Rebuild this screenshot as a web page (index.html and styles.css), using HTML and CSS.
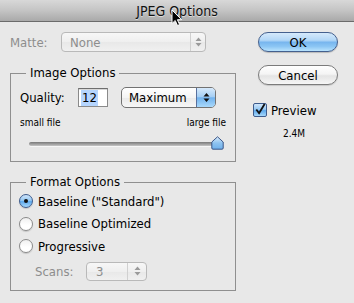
FILE: index.html
```html
<!DOCTYPE html>
<html>
<head>
<meta charset="utf-8">
<link rel="stylesheet" href="styles.css">
</head>
<body>
<div class="window">
  <div class="titlebar"><span class="title">JPEG Options</span></div>
  <div class="content">
    <div class="left">
      <div class="matte-row">
        <span class="lbl dim">Matte:</span>
        <div class="popup dis matte-pop">
          <span class="pop-text">None</span>
          <span class="pop-arrows"><svg width="7" height="10" viewBox="0 0 7 10"><path d="M3.5 0.5 L6.5 4 L0.5 4 Z M3.5 9.5 L6.5 6 L0.5 6 Z" fill="#9a9a9a"/></svg></span>
        </div>
      </div>
      <fieldset class="group image-opts">
        <legend>Image Options</legend>
        <div class="quality-row">
          <span class="lbl">Quality:</span>
          <div class="field"><span class="sel">12</span></div>
          <div class="popup max-pop">
            <span class="pop-text">Maximum</span>
            <span class="pop-arrows blue"><svg width="7" height="11" viewBox="0 0 7 11"><path d="M3.5 1 L6.5 4.5 L0.5 4.5 Z M3.5 10 L6.5 6.5 L0.5 6.5 Z" fill="#111"/></svg></span>
          </div>
        </div>
        <div class="scale-labels"><span>small file</span><span>large file</span></div>
        <div class="slider">
          <div class="track"></div>
          <svg class="thumb" width="13" height="14" viewBox="0 0 13 14">
            <defs>
              <linearGradient id="tg" x1="0" y1="0" x2="0" y2="1">
                <stop offset="0" stop-color="#dcecfb"/>
                <stop offset="0.5" stop-color="#8ec3f0"/>
                <stop offset="1" stop-color="#6fb1ec"/>
              </linearGradient>
            </defs>
            <path d="M6.5 0.8 L12.2 6 L12.2 12 Q12.2 13.2 11 13.2 L2 13.2 Q0.8 13.2 0.8 12 L0.8 6 Z" fill="url(#tg)" stroke="#3b5688" stroke-width="1"/>
          </svg>
        </div>
      </fieldset>
      <fieldset class="group format-opts">
        <legend>Format Options</legend>
        <div class="radio-row"><span class="radio on"><span class="dot"></span></span><span>Baseline ("Standard")</span></div>
        <div class="radio-row"><span class="radio"></span><span>Baseline Optimized</span></div>
        <div class="radio-row"><span class="radio"></span><span>Progressive</span></div>
        <div class="scans-row">
          <span class="lbl dim">Scans:</span>
          <div class="popup dis scans-pop">
            <span class="pop-text">3</span>
            <span class="pop-arrows"><svg width="7" height="10" viewBox="0 0 7 10"><path d="M3.5 0.5 L6.5 4 L0.5 4 Z M3.5 9.5 L6.5 6 L0.5 6 Z" fill="#9a9a9a"/></svg></span>
          </div>
        </div>
      </fieldset>
    </div>
    <div class="right">
      <div class="btn ok">OK</div>
      <div class="btn cancel">Cancel</div>
      <div class="check-row">
        <span class="checkbox"><svg width="13" height="13" viewBox="0 0 13 13"><path d="M2.5 6.5 L5.5 10.5 L11.5 0.5" fill="none" stroke="#111" stroke-width="2"/></svg></span>
        <span>Preview</span>
      </div>
      <div class="size">2.4M</div>
    </div>
  </div>
  <svg class="cursor" width="12" height="18" viewBox="0 0 12 18">
    <path d="M1 1 L1 14.5 L4.2 11.5 L6.5 16.5 L8.6 15.6 L6.4 10.7 L10.6 10.7 Z" fill="#000" stroke="#fff" stroke-width="1" stroke-linejoin="round"/>
  </svg>
</div>
</body>
</html>
```

FILE: styles.css
```css
* { box-sizing: border-box; }
html, body { margin: 0; padding: 0; }
body {
  background: #e8e8e8;
  font-family: "DejaVu Sans Condensed", "DejaVu Sans", sans-serif;
  font-stretch: condensed;
  font-size: 13px;
  color: #000;
}
.window {
  position: relative;
  width: 354px;
  height: 303px;
  overflow: hidden;
  background: #e8e8e8;
}
.titlebar {
  height: 22px;
  background: linear-gradient(to bottom, #d8d8d8 0%, #c4c4c4 50%, #a9a9a9 100%);
  border-bottom: 1px solid #6b6b6b;
  display: flex;
  justify-content: center;
  align-items: center;
}
.title {
  font-size: 14px;
  color: #111;
  text-shadow: 0 1px 0 rgba(255,255,255,0.5);
  padding-top: 1px;
}
.content {
  display: flex;
}
.left {
  width: 236px;
  padding-left: 10px;
  padding-top: 10px;
}
.lbl { white-space: nowrap; }
.dim { color: #8d8d8d; }
.matte-row {
  display: flex;
  align-items: center;
  height: 20px;
}
.matte-row .lbl { width: 51px; }
.popup {
  display: flex;
  align-items: center;
  border: 1px solid #7d7d7d;
  border-radius: 4px;
  background: linear-gradient(to bottom, #ffffff 0%, #f4f4f4 50%, #e9e9e9 51%, #f7f7f7 100%);
  overflow: hidden;
}
.popup.dis {
  border-color: #b9b9b9;
  background: linear-gradient(to bottom, #f7f7f7 0%, #efefef 50%, #e8e8e8 51%, #f0f0f0 100%);
  color: #8d8d8d;
}
.pop-text { flex: 1; padding-left: 8px; white-space: nowrap; }
.pop-arrows {
  display: flex;
  align-items: center;
  justify-content: center;
  height: 100%;
  border-left: 1px solid #d0d0d0;
}
.matte-pop { width: 145px; height: 20px; }
.matte-pop .pop-arrows { width: 15px; }
.group {
  margin: 0;
  border: 1px solid #8f8f8f;
  padding: 0 9px 0 9px;
  width: 226px;
}
.group legend {
  padding: 0 4px;
  margin-left: 6px;
  line-height: 16px;
}
.image-opts {
  margin-top: 13px;
  padding-top: 6px;
  padding-bottom: 11px;
}
.quality-row {
  display: flex;
  align-items: center;
  height: 21px;
}
.quality-row .lbl { width: 58px; }
.field {
  width: 30px;
  height: 19px;
  background: #fff;
  border: 1px solid #8a8a8a;
  border-top-color: #6e6e6e;
  box-shadow: inset 0 1px 0 #d8d8d8;
  padding: 1px 0 0 2px;
  line-height: 16px;
}
.sel { background: #b5d5fe; display: inline-block; padding: 0 1px; }
.max-pop {
  margin-left: 13px;
  width: 95px;
  height: 21px;
  border-radius: 5px;
  border-color: #727272;
}
.max-pop .pop-text { padding-left: 7px; }
.pop-arrows.blue {
  width: 19px;
  border-left: 1px solid #58709e;
  background: linear-gradient(to bottom, #d6e9fb 0%, #a6cff4 45%, #71b2ee 52%, #a9d9fb 100%);
}
.scale-labels {
  display: flex;
  justify-content: space-between;
  font-size: 10px;
  line-height: 12px;
  margin-top: 9px;
}
.slider {
  display: flex;
  align-items: center;
  height: 14px;
  margin-top: 7px;
  padding-left: 9px;
  padding-right: 2px;
}
.track {
  flex: 1;
  height: 4px;
  margin-top: 1px;
  border-radius: 2px;
  background: linear-gradient(to bottom, #7a7a7a 0%, #9c9c9c 50%, #c6c6c6 100%);
  box-shadow: 0 1px 0 #f6f6f6;
}
.thumb { margin-left: -2px; display: block; }
.format-opts {
  margin-top: 12px;
  padding-top: 0;
  padding-bottom: 9px;
}
.radio-row {
  display: flex;
  align-items: center;
  height: 22.5px;
  gap: 5px;
  white-space: nowrap;
}
.radio {
  width: 14px;
  height: 14px;
  margin-left: -1px;
  border-radius: 50%;
  border: 1px solid #8a8a8a;
  background: linear-gradient(to bottom, #f0f0f0 0%, #ffffff 60%, #ffffff 100%);
  box-shadow: 0 1px 1px rgba(0,0,0,0.15);
  display: flex;
  align-items: center;
  justify-content: center;
  flex: none;
}
.radio.on {
  border-color: #3d5b8c;
  background: linear-gradient(to bottom, #cfe5fa 0%, #95c8f3 45%, #5fa9ec 55%, #a6d8fb 100%);
}
.dot {
  width: 4px;
  height: 4px;
  border-radius: 50%;
  background: #111;
}
.scans-row {
  display: flex;
  align-items: center;
  margin-top: 4px;
  padding-left: 15px;
  height: 19px;
}
.scans-row .lbl { width: 51px; }
.scans-pop { width: 61px; height: 19px; }
.scans-pop .pop-text { padding-left: 9px; }
.scans-pop .pop-arrows { width: 19px; }
.right {
  margin-left: 17px;
  padding-top: 10px;
  width: 90px;
}
.btn {
  margin-left: 5px;
  width: 80px;
  height: 20px;
  border-radius: 10px;
  display: flex;
  align-items: center;
  justify-content: center;
  font-size: 13px;
  line-height: 1;
}
.ok {
  border: 1px solid #44608e;
  background: linear-gradient(to bottom, #d5e9fb 0%, #b3d7f7 40%, #78b6ee 52%, #8cc6f4 75%, #b9e3fd 100%);
  box-shadow: 0 1px 1px rgba(0,0,0,0.2);
}
.cancel {
  margin-top: 13px;
  border: 1px solid #7b7b7b;
  background: linear-gradient(to bottom, #ffffff 0%, #f4f4f4 45%, #e4e4e4 55%, #f6f6f6 100%);
  box-shadow: 0 1px 1px rgba(0,0,0,0.15);
}
.check-row {
  display: flex;
  align-items: center;
  gap: 4px;
  margin-top: 17px;
  height: 16px;
}
.checkbox {
  width: 14px;
  height: 14px;
  border: 1px solid #3d5b8c;
  border-radius: 2px;
  background: linear-gradient(to bottom, #cfe5fa 0%, #95c8f3 45%, #5fa9ec 55%, #a6d8fb 100%);
  display: flex;
  align-items: center;
  justify-content: center;
  flex: none;
}
.checkbox svg { display: block; margin-top: -2px; }
.size {
  margin-top: 10px;
  padding-left: 30px;
  font-size: 10px;
  line-height: 12px;
}
.cursor {
  position: absolute;
  left: 171px;
  top: 9px;
}
```
